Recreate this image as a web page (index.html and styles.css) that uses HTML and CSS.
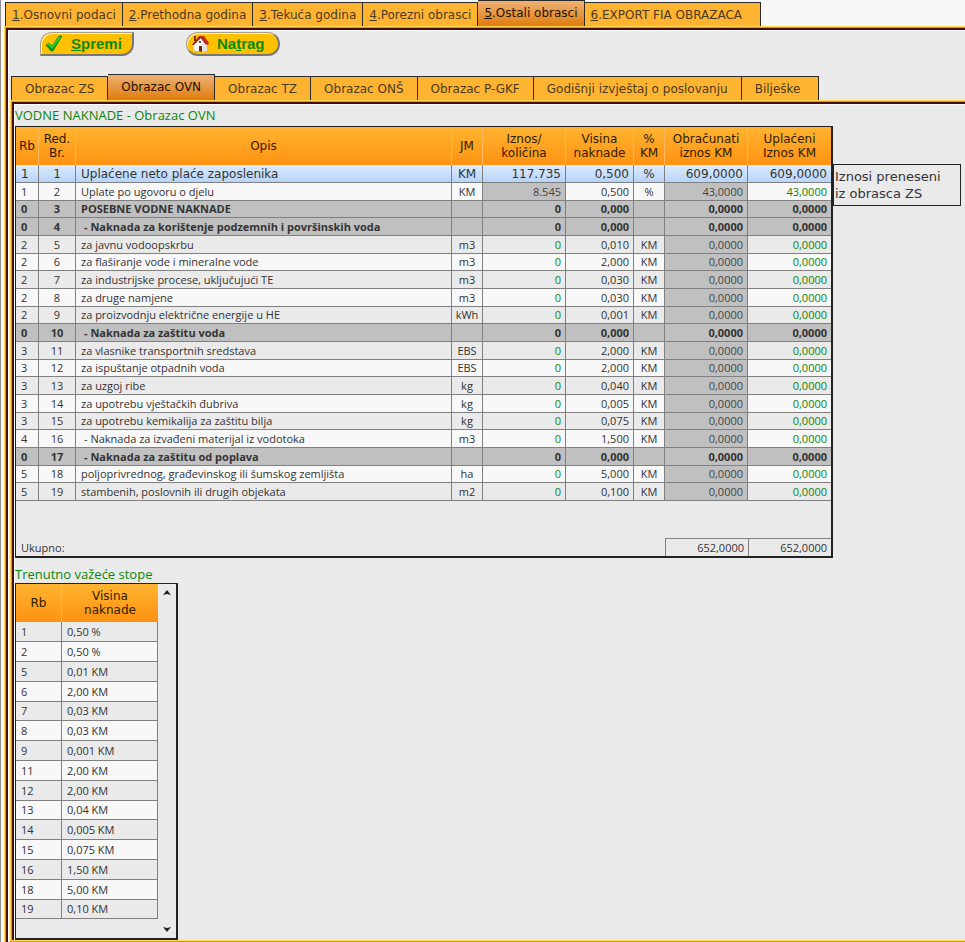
FILE: index.html
```
<!DOCTYPE html>
<html lang="hr">
<head>
    <meta charset="UTF-8">
    <meta name="viewport" content="width=device-width, initial-scale=1.0">
    <title>Obrazac OVN</title>
    <link rel="stylesheet" href="styles.css">
</head>
<body>
    <nav class="tabs main-tabs">
        <a href="#osnovni"><u>1</u>.Osnovni podaci</a>
        <a href="#prethodna"><u>2</u>.Prethodna godina</a>
        <a href="#tekuca"><u>3</u>.Tekuća godina</a>
        <a href="#porezni"><u>4</u>.Porezni obrasci</a>
        <a href="#ostali" class="active"><u>5</u>.Ostali obrasci</a>
        <a href="#export"><u>6</u>.EXPORT FIA OBRAZACA</a>
    </nav>

    <div class="frame outer">
        <div class="toolbar">
            <button type="button" class="btn save">
                <svg width="18" height="18" viewBox="0 0 18 18">
                    <path d="M1 10 L4 8 L7 11 L14 1 L17 1 L8 16 L6 16 Z" fill="#0c9a1c" stroke="#087014" stroke-width="0.6"/>
                    <path d="M2.500 10 L4 9 L7 12.500 L15 2" fill="none" stroke="#35e03c" stroke-width="1.300"/>
                </svg>
                <span><u>S</u>premi</span>
            </button>
            <button type="button" class="btn back">
                <svg width="18" height="18" viewBox="0 0 18 18">
                    <path d="M2 9 L9 2 L16 9 L16 16 L3 16 Z" fill="#ffffff" stroke="#b9b0a8" stroke-width="0.5"/>
                    <path d="M11 9 L16 9 L16 16 L11 17 Z" fill="#e4e0dc"/>
                    <path d="M8 1 L13 1 L18 8 L17 10 L14 9 Z" fill="#c22a20"/>
                    <path d="M1 10 L8 1 L10 3 L3 10 Z" fill="#9c2018"/>
                    <rect x="3" y="1" width="2" height="5" fill="#8c2a1c"/>
                    <path d="M8 11 L11 11 L11 17 L8 16 Z" fill="#70261a"/>
                    <rect x="8" y="6" width="2" height="2" fill="#555555"/>
                </svg>
                <span>Na<u>t</u>rag</span>
            </button>
        </div>

        <nav class="tabs sub-tabs">
            <a href="#zs">Obrazac ZS</a>
            <a href="#ovn" class="active">Obrazac OVN</a>
            <a href="#tz">Obrazac TZ</a>
            <a href="#ons">Obrazac ONŠ</a>
            <a href="#pgkf">Obrazac P-GKF</a>
            <a href="#izvjestaj">Godišnji izvještaj o poslovanju</a>
            <a href="#biljeske">Bilješke</a>
        </nav>

        <main class="frame inner">
            <h2 id="title-ovn">VODNE NAKNADE - Obrazac OVN</h2>
            <div class="form-row">
                <div class="grid-box">
                    <table class="grid fees" aria-labelledby="title-ovn">
                        <colgroup>
                            <col class="c-rb"><col class="c-red"><col><col class="c-jm"><col class="c-sum">
                            <col class="c-rate"><col class="c-jm"><col class="c-sum"><col class="c-sum">
                        </colgroup>
                        <thead>
                            <tr><th>Rb</th><th>Red.<br>Br.</th><th>Opis</th><th>JM</th><th>Iznos/<br>količina</th><th>Visina<br>naknade</th><th>%<br>KM</th><th>Obračunati<br>iznos KM</th><th>Uplaćeni<br>Iznos KM</th></tr>
                        </thead>
                        <tbody>
                            <tr class="selected"><td>1</td><td>1</td><td>Uplaćene neto plaće zaposlenika</td><td>KM</td><td>117.735</td><td>0,500</td><td>%</td><td>609,0000</td><td>609,0000</td></tr>
                            <tr><td>1</td><td>2</td><td>Uplate po ugovoru o djelu</td><td>KM</td><td class="locked">8.545</td><td>0,500</td><td>%</td><td>43,0000</td><td>43,0000</td></tr>
                            <tr class="group"><td>0</td><td>3</td><td>POSEBNE VODNE NAKNADE</td><td></td><td>0</td><td>0,000</td><td></td><td>0,0000</td><td>0,0000</td></tr>
                            <tr class="group"><td>0</td><td>4</td><td class="sub">- Naknada za korištenje podzemnih i površinskih voda</td><td></td><td>0</td><td>0,000</td><td></td><td>0,0000</td><td>0,0000</td></tr>
                            <tr><td>2</td><td>5</td><td>za javnu vodoopskrbu</td><td>m3</td><td>0</td><td>0,010</td><td>KM</td><td>0,0000</td><td>0,0000</td></tr>
                            <tr><td>2</td><td>6</td><td>za flaširanje vode i mineralne vode</td><td>m3</td><td>0</td><td>2,000</td><td>KM</td><td>0,0000</td><td>0,0000</td></tr>
                            <tr><td>2</td><td>7</td><td>za industrijske procese, uključujući TE</td><td>m3</td><td>0</td><td>0,030</td><td>KM</td><td>0,0000</td><td>0,0000</td></tr>
                            <tr><td>2</td><td>8</td><td>za druge namjene</td><td>m3</td><td>0</td><td>0,030</td><td>KM</td><td>0,0000</td><td>0,0000</td></tr>
                            <tr><td>2</td><td>9</td><td>za proizvodnju električne energije u HE</td><td>kWh</td><td>0</td><td>0,001</td><td>KM</td><td>0,0000</td><td>0,0000</td></tr>
                            <tr class="group"><td>0</td><td>10</td><td class="sub">- Naknada za zaštitu voda</td><td></td><td>0</td><td>0,000</td><td></td><td>0,0000</td><td>0,0000</td></tr>
                            <tr><td>3</td><td>11</td><td>za vlasnike transportnih sredstava</td><td>EBS</td><td>0</td><td>2,000</td><td>KM</td><td>0,0000</td><td>0,0000</td></tr>
                            <tr><td>3</td><td>12</td><td>za ispuštanje otpadnih voda</td><td>EBS</td><td>0</td><td>2,000</td><td>KM</td><td>0,0000</td><td>0,0000</td></tr>
                            <tr><td>3</td><td>13</td><td>za uzgoj ribe</td><td>kg</td><td>0</td><td>0,040</td><td>KM</td><td>0,0000</td><td>0,0000</td></tr>
                            <tr><td>3</td><td>14</td><td>za upotrebu vještačkih đubriva</td><td>kg</td><td>0</td><td>0,005</td><td>KM</td><td>0,0000</td><td>0,0000</td></tr>
                            <tr><td>3</td><td>15</td><td>za upotrebu kemikalija za zaštitu bilja</td><td>kg</td><td>0</td><td>0,075</td><td>KM</td><td>0,0000</td><td>0,0000</td></tr>
                            <tr><td>4</td><td>16</td><td class="sub">- Naknada za izvađeni materijal iz vodotoka</td><td>m3</td><td>0</td><td>1,500</td><td>KM</td><td>0,0000</td><td>0,0000</td></tr>
                            <tr class="group"><td>0</td><td>17</td><td class="sub">- Naknada za zaštitu od poplava</td><td></td><td>0</td><td>0,000</td><td></td><td>0,0000</td><td>0,0000</td></tr>
                            <tr><td>5</td><td>18</td><td>poljoprivrednog, građevinskog ili šumskog zemljišta</td><td>ha</td><td>0</td><td>5,000</td><td>KM</td><td>0,0000</td><td>0,0000</td></tr>
                            <tr><td>5</td><td>19</td><td>stambenih, poslovnih ili drugih objekata</td><td>m2</td><td>0</td><td>0,100</td><td>KM</td><td>0,0000</td><td>0,0000</td></tr>
                        </tbody>
                    </table>
                    <div class="totals">
                        <span class="label">Ukupno:</span>
                        <output>652,0000</output>
                        <output>652,0000</output>
                    </div>
                </div>
                <p class="note">Iznosi preneseni<br>iz obrasca ZS</p>
            </div>

            <h2 id="title-stope">Trenutno važeće stope</h2>
            <div class="rates-box">
                <table class="grid rates" aria-labelledby="title-stope">
                    <thead>
                        <tr><th>Rb</th><th>Visina<br>naknade</th></tr>
                    </thead>
                    <tbody>
                        <tr><td>1</td><td>0,50 %</td></tr>
                        <tr><td>2</td><td>0,50 %</td></tr>
                        <tr><td>5</td><td>0,01 KM</td></tr>
                        <tr><td>6</td><td>2,00 KM</td></tr>
                        <tr><td>7</td><td>0,03 KM</td></tr>
                        <tr><td>8</td><td>0,03 KM</td></tr>
                        <tr><td>9</td><td>0,001 KM</td></tr>
                        <tr><td>11</td><td>2,00 KM</td></tr>
                        <tr><td>12</td><td>2,00 KM</td></tr>
                        <tr><td>13</td><td>0,04 KM</td></tr>
                        <tr><td>14</td><td>0,005 KM</td></tr>
                        <tr><td>15</td><td>0,075 KM</td></tr>
                        <tr><td>16</td><td>1,50 KM</td></tr>
                        <tr><td>18</td><td>5,00 KM</td></tr>
                        <tr><td>19</td><td>0,10 KM</td></tr>
                    </tbody>
                </table>
                <div class="scroll">
                    <button type="button" aria-label="Gore"><svg width="8" height="5" viewBox="0 0 8 5"><path d="M0 5 L4 0 L8 5 L4 4 Z" fill="#222"/></svg></button>
                    <button type="button" aria-label="Dolje"><svg width="8" height="5" viewBox="0 0 8 5"><path d="M0 0 L4 5 L8 0 L4 1 Z" fill="#222"/></svg></button>
                </div>
            </div>
        </main>
    </div>
</body>
</html>
```
FILE: styles.css
```
* {
    box-sizing: border-box;
}

body {
    margin: 0;
    padding-left: 3px;
    border-left: 1px solid #8f8f8f;
    min-height: 100vh;
    display: flex;
    flex-direction: column;
    background: #f7f7f7;
    color: #333;
    font-family: "DejaVu Sans", Verdana, sans-serif;
    font-size: 12px;
}

/* tabs */
.tabs {
    display: flex;
    align-items: flex-end;
    height: 26px;
    padding-left: 1px;
}

.tabs a {
    height: 24px;
    line-height: 24px;
    padding: 0 6px;
    background: #ffb431;
    border-top: 1px solid #2b2b2b;
    border-right: 1px solid #2b2b2b;
    color: #4b3a20;
    text-decoration: none;
    white-space: nowrap;
}

.tabs a:first-child {
    border-left: 1px solid #2b2b2b;
}

.tabs a.active {
    height: 26px;
    background: linear-gradient(#eeb173, #e07c0e);
    color: #1e1000;
}

.main-tabs a:last-child {
    padding-right: 18px;
}

.sub-tabs a {
    padding: 0 13px;
}

.sub-tabs a:last-child {
    padding-right: 18px;
}

/* gold and dark red frame, open on the right */
.frame {
    border: 1px solid #ffd84c;
    border-right: 0;
    box-shadow: inset 1px 1px 0 #e8960f, inset 3px 3px 0 #4a0a08, inset 4px 4px 0 #fff;
    background: #eaeaea;
}

.outer {
    flex: 1;
    padding: 5px 0 0 5px;
    border-bottom: 0;
}

.inner {
    padding: 5px 4px 0 4px;
    box-shadow: inset 1px 1px 0 #e8960f, inset 3px 3px 0 #4a0a08, inset 4px 4px 0 #fff,
        0 1px 0 #e8960f, 0 3px 0 #4a0a08;
}

.toolbar {
    display: flex;
    gap: 52px;
    height: 42px;
    padding-left: 30px;
}

.btn {
    display: flex;
    align-items: center;
    gap: 8px;
    width: 94px;
    height: 24px;
    padding: 0 4px;
    background: #ffc000;
    border: 1px solid #a8a08c;
    border-right: 2px solid #777;
    border-bottom: 2px solid #777;
    box-shadow: inset 1px 1px 0 #fff3b8;
    color: #0a8a0a;
    font: bold 15px "Liberation Sans", Arial, sans-serif;
    cursor: pointer;
}

.save {
    border-radius: 12px 0 12px 0;
}

.back {
    border-radius: 12px;
}

h2 {
    margin: 0;
    height: 20px;
    color: #0a860a;
    font: 13px/18px "Open Sans", "Trebuchet MS", sans-serif;
}

/* grids */
.form-row {
    display: flex;
    align-items: flex-start;
}

.grid-box {
    flex: 1;
    border: 1px solid #222;
    border-right-width: 2px;
    border-bottom-width: 2px;
}

.grid {
    width: 100%;
    table-layout: fixed;
    border-collapse: separate;
    border-spacing: 0;
    font-family: "Open Sans", "Trebuchet MS", sans-serif;
    font-size: 11px;
}

.c-rb { width: 23px; }
.c-red { width: 37px; }
.c-jm { width: 31px; }
.c-rate { width: 68px; }
.c-sum { width: 83px; }

.grid th {
    height: 38px;
    padding: 0;
    background: linear-gradient(#ffb431, #ff9212);
    border-right: 1px solid #ffb95a;
    color: #2e1c00;
    font: 12px/14px "DejaVu Sans", Verdana, sans-serif;
}

.grid td {
    height: 18px;
    padding: 0 5px;
    border-right: 1px solid #808080;
    border-bottom: 1px solid #808080;
    line-height: 16px;
    white-space: nowrap;
}

.grid tr > :last-child {
    border-right: 0;
}

.grid tbody tr:nth-child(even) {
    background: #f8f8f8;
}

.fees tbody tr:nth-child(3n) td {
    height: 17px;
}

.fees td:nth-child(2),
.fees td:nth-child(4),
.fees td:nth-child(7) {
    padding: 0;
    text-align: center;
}

.fees td:nth-child(5),
.fees td:nth-child(6),
.fees td:nth-child(8),
.fees td:nth-child(9) {
    padding: 0 4px;
    text-align: right;
}

.fees td:nth-child(5),
.fees td:nth-child(9) {
    color: #0a860a;
}

.fees td.locked,
.fees td:nth-child(8) {
    background: #c0c0c0;
    color: #444;
}

.fees td.sub {
    padding-left: 8px;
}

.fees tbody tr.group:nth-child(n) {
    background: #c0c0c0;
    font-weight: bold;
}

.fees tbody .selected {
    background: linear-gradient(#dcebfd, #b5d3f8);
    font: 12px "DejaVu Sans", Verdana, sans-serif;
}

.fees .group td:nth-child(n),
.fees .selected td:nth-child(n) {
    background: none;
    color: #333;
}

.totals {
    display: flex;
    align-items: flex-end;
    height: 55px;
    font: 11px/17px "Open Sans", "Trebuchet MS", sans-serif;
}

.totals .label {
    flex: 1;
    padding-left: 5px;
}

.totals output {
    width: 83px;
    padding-right: 4px;
    border-top: 1px solid #808080;
    border-left: 1px solid #808080;
    text-align: right;
}

.note {
    width: 128px;
    margin: 38px 0 0;
    padding: 3px 1px;
    border: 1px solid #222;
    font-size: 13px;
    line-height: 17px;
    white-space: nowrap;
}

/* current rates */
.form-row + h2 {
    margin-top: 7px;
    height: 18px;
}

.rates-box {
    display: flex;
    width: 163px;
    border: 1px solid #222;
    border-right-width: 2px;
    border-bottom-width: 2px;
}

.rates {
    flex: 1;
    align-self: flex-start;
    margin-bottom: 19px;
}

.rates th:first-child {
    width: 46px;
}

.rates tbody td {
    height: 20px;
}

.rates tbody tr:nth-child(5n) td {
    height: 19px;
}

.rates tr > td:last-child {
    border-right: 1px solid #808080;
}

.scroll {
    display: flex;
    flex-direction: column;
    justify-content: space-between;
    width: 18px;
}

.scroll button {
    display: flex;
    align-items: center;
    justify-content: center;
    height: 17px;
    padding: 0;
    border: 0;
    background: none;
}
```
